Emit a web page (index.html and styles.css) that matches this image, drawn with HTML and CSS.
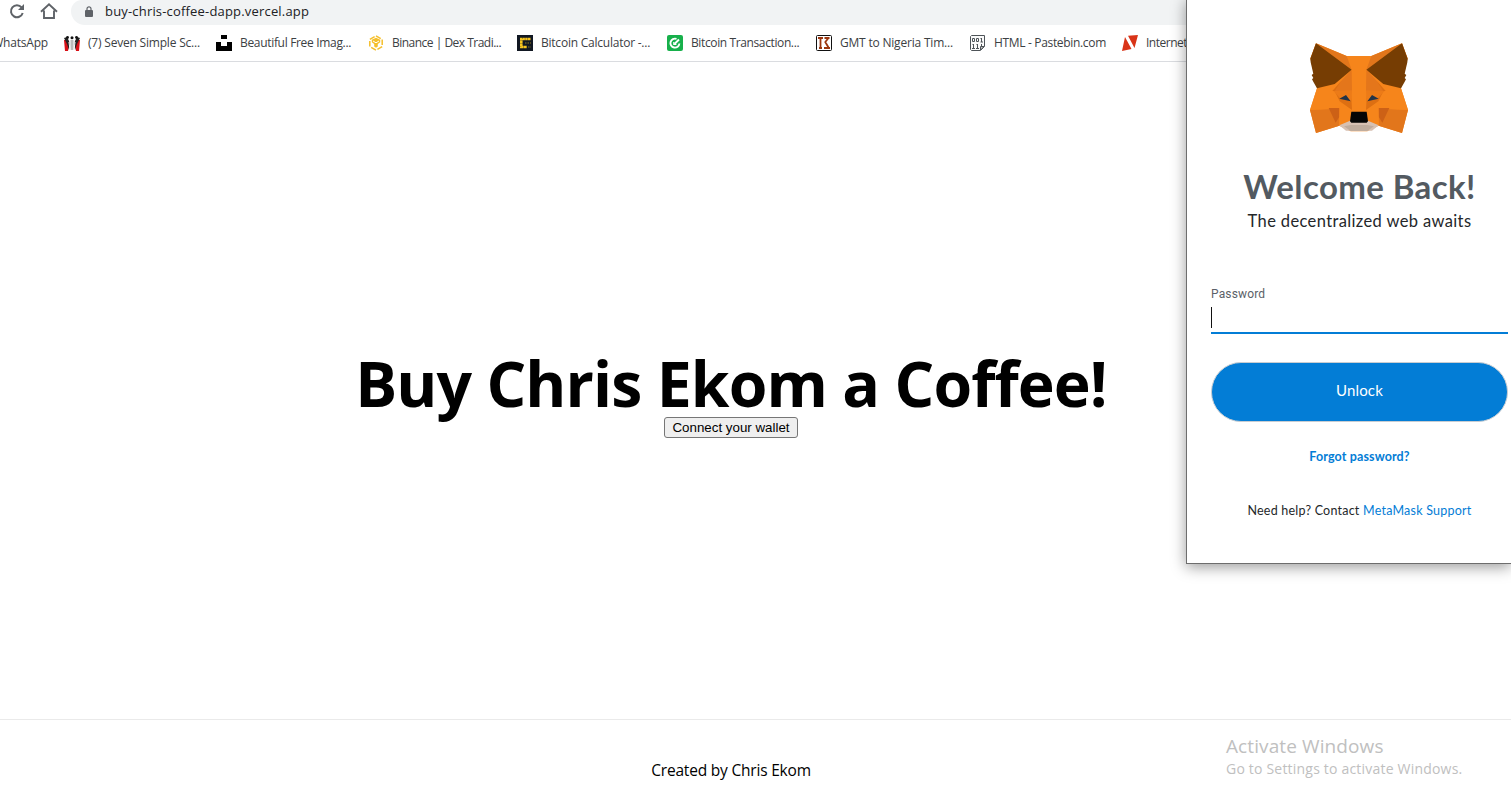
FILE: index.html
```html
<!DOCTYPE html>
<html lang="en">
<head>
<meta charset="utf-8">
<title>Buy Chris Ekom a Coffee!</title>
<link rel="stylesheet" href="styles.css">
</head>
<body>
<div class="screen">
  <header class="browser">
    <div class="toolbar">
      <svg class="reload" width="16" height="18" viewBox="0 0 16 18" fill="none" stroke="#5f6368" stroke-width="2"><path d="M13.700 11A6 6 0 1 1 12.600 5.400"/><path d="M15 2v6H9z" fill="#5f6368" stroke="none"/></svg>
      <svg class="home" width="18" height="18" viewBox="0 0 18 18" fill="none" stroke="#5f6368" stroke-width="1.900"><path d="M1 9.700L9 2.300l8 7.400M4 8.500V16h10V8.500"/></svg>
      <div class="address">
        <svg width="8" height="11" viewBox="0 0 8 11"><rect y="4" width="8" height="7" rx="1" fill="#5f6368"/><path d="M2 4.500V2.800a2 2 0 0 1 4 0v1.700" fill="none" stroke="#5f6368" stroke-width="1.200"/></svg>
        <span class="url">buy-chris-coffee-dapp.vercel.app</span>
      </div>
    </div>
    <nav class="bookmarks">
      <a class="bm first">WhatsApp</a>
      <a class="bm seven"><svg width="16" height="16" viewBox="0 0 16 16"><path d="M0 5l3 0 2 5-1 6H1zM16 5l-3 0-2 5 1 6h3z" fill="#d80f16"/><path d="M0 3l3-1 2 4 1 4-1 5-2-6zM16 3l-3-1-2 4-1 4 1 5 2-6z" fill="#222"/><path d="M6.500 5h3v10h-3z" fill="#bbb"/><circle cx="3.500" cy="2.500" r="1.400" fill="#111"/><circle cx="8" cy="2.800" r="1.500" fill="#111"/><circle cx="12.500" cy="2.500" r="1.400" fill="#111"/><path d="M5 7l1 8M11 7l-1 8" stroke="#fff"/></svg>(7) Seven Simple Sc...</a>
      <a class="bm images"><svg width="16" height="16" viewBox="0 0 16 16"><path d="M5 0h6v4H5zM0 7h5v4h6V7h5v9H0z"/></svg>Beautiful Free Imag...</a>
      <a class="bm binance"><svg width="16" height="16" viewBox="0 0 16 16" fill="none" stroke="#f5bf2b"><path d="M8 .8l6.200 3.600v7.200L8 15.200l-6.200-3.600V4.400z" stroke-width="1.500" stroke-dasharray="5.500 1.700"/><path d="M3.800 4.800L8 2.800l4.200 2v2.500L9.800 9v2.500L8 12.700l-1.800-1.200V9L3.800 7.300z" fill="#f5bf2b" stroke="none"/><path d="M5 6l3 1.800L11 6" stroke="#fff"/></svg>Binance | Dex Tradi...</a>
      <a class="bm calculator"><svg width="16" height="16" viewBox="0 0 16 16"><path fill="#111722" d="M0 0h16v16H0z"/><path d="M13.500 4H4.300v8H10" fill="none" stroke="#f7c51e" stroke-width="2.600" stroke-dasharray="2.500 .3"/><path d="M8 8h6M11 12h3" stroke="#665a22" stroke-width="1.500" stroke-dasharray="1.500 1"/></svg>Bitcoin Calculator -...</a>
      <a class="bm transaction"><svg width="16" height="16" viewBox="0 0 16 16"><rect width="16" height="16" rx="2" fill="#17b04b"/><path d="M12.400 8.500A4.500 4.500 0 1 1 9.500 3.900M7.500 9l4.500-4.500" fill="none" stroke="#fff" stroke-width="1.900"/><path d="M6.800 7v2.500h2.600" fill="none" stroke="#fff" stroke-width="1.200"/></svg>Bitcoin Transaction...</a>
      <a class="bm gmt"><svg width="16" height="16" viewBox="0 0 16 16"><rect x=".5" y=".5" width="15" height="15" rx="1" fill="#fff" stroke="#111"/><path d="M2 3h5M4.500 3v10M3 13h3M8.500 3h5M12.500 3L9.300 7l3.200 5.500M8 13h6" fill="none" stroke="#9b360f" stroke-width="1.800"/></svg>GMT to Nigeria Tim...</a>
      <a class="bm pastebin"><svg width="16" height="16" viewBox="0 0 16 16" fill="none" stroke="#4e5458"><path d="M1.500.5h13v11l-4 4h-9l-1-1v-13z" fill="#fafafa"/><path d="M10.500 15v-3.500H14z" fill="#ccc"/><path d="M2.500 3.500h2v3h-2zM6.500 3.500h2v3h-2zM11.500 3v4M10.500 3.500h1M10.500 7h2.500M3.500 9v4M2.500 9.500h1M2 13.500h3M7.500 9v4M6.500 9.500h1M6 13.500h3M11.500 9v2"/></svg>HTML - Pastebin.com</a>
      <a class="bm internet"><svg width="16" height="16" viewBox="0 0 16 16" fill="#d93418"><path d="M3 2L9.500 14 0 16zM6 .8L16 0l-3.500 13z"/></svg>Internet</a>
    </nav>
  </header>
  <main class="hero">
    <h1>Buy Chris Ekom a Coffee!</h1>
    <button class="connect">Connect your wallet</button>
  </main>
  <footer class="footer">Created by Chris Ekom</footer>

  <aside class="watermark">
    <div class="wm-title">Activate Windows</div>
    <div class="wm-sub">Go to Settings to activate Windows.</div>
  </aside>

  <section class="popup">
    <svg class="fox" width="120" height="108" viewBox="0 0 360 324">
      <path fill="#f6851b" d="M140 66h74l92-38 17 45-20 90 21 65-18 69-70-22-34 17h-50l-34-17-70 22-18-69 21-65-20-90 17-45z"/>
      <path fill="#e2761b" d="M48 28l92 38 15 41zM306 28l-92 38-15 41zM30 228l88-4v51l-70 22zM324 228l-88-4v51l70 22z"/>
      <path fill="#fff" d="M28 68l12 52-5 30 13 16 -22 60-10-80zM326 68l-12 52 5 30-13 16 22 60 10-80z"/>
      <path fill="#e2761b" d="M48 28L32 73l9 36 20-20zM306 28l16 45-9 36-20-20z"/>
      <path fill="#f6851b" d="M51 163l-21 65 88-5 10-21-28-50zM303 163l21 65-88-5-10-21 28-50z"/>
      <path fill="#763d03" d="M48 28l107 79-51 43-53 13-9-16-6-11 4-4-5-9 5-4-8-34-1-11zM306 28L199 107l51 43 53 13 9-16 6-11-4-4 5-9-5-4 8-34 1-11z"/>
      <path fill="#e4761b" d="M155 107l-31 33-24 31 56-1zM199 107l31 33 24 31-56-1z"/>
      <path fill="#dd6f12" d="M124 140l-27 31 56 0 3 57-37-26-15-30zM230 140l27 31-56 0-3 57 37-26 15-30z"/>
      <path fill="#ec7b18" d="M100 171l20 21 33 9 3-31zM254 171l-20 21-33 9-3-31z"/>
      <path fill="#cd6116" d="M86 224h33l-1 26-11 18zM268 224h-33l1 26 11 18z" transform="translate(0 -2)"/>
      <path fill="#f6851b" d="M118 204l40 27-7 37-33 7zM236 204l-40 27 7 37 33 7z"/>
      <path fill="#233447" d="M118 194l20-11 14 19zM236 194l-20-11-14 19z"/>
      <path fill="#d7c1b3" d="M118 274l32-14h54l32 14-20 16h-78z"/>
      <path fill="#c0ad9e" d="M132 277l20-4h50l20 4-20 14h-50z"/>
      <path fill="#050505" d="M154 233h46l4 29-4 4h-46l-4-4z"/>
    </svg>
    <h2>Welcome Back!</h2>
    <p class="tagline">The decentralized web awaits</p>
    <label class="label">Password</label>
    <div class="field"><i class="caret"></i></div>
    <button class="unlock">Unlock</button>
    <a class="forgot">Forgot password?</a>
    <p class="help">Need help? Contact <a>MetaMask Support</a></p>
  </section>
</div>
</body>
</html>
```
FILE: styles.css
```css
* { box-sizing: border-box; }
body { margin: 0; background: #fff; font-family: "Open Sans", sans-serif; overflow: hidden; }
.screen { position: relative; width: 1511px; height: 804px; overflow: hidden; display: flex; flex-direction: column; }
.browser { height: 62px; border-bottom: 1px solid #dadce0; }
.toolbar { height: 25px; display: flex; padding-left: 9px; }
.reload { margin-top: 2px; }
.home { margin: 2px 13px 0 15px; }
.address { flex: 1; height: 25px; background: #f1f3f4; border-bottom-left-radius: 14px; border-top-left-radius: 11px; display: flex; align-items: center; gap: 12px; padding: 0 0 3px 14px; }
.url { font-size: 13px; color: #202124; white-space: nowrap; letter-spacing: 0.18px; }
.bookmarks { display: flex; gap: 16px; height: 36px; align-items: center; white-space: nowrap; font-size: 12px; line-height: 16px; color: #3c4043; letter-spacing: -0.2px; }
.bm { display: flex; gap: 8px; align-items: center; flex: none; }
.bm svg { flex: none; }
.first { width: 48px; justify-content: flex-end; }
.seven { width: 136px; }
.images { width: 136px; letter-spacing: -0.32px; }
.binance { width: 133px; letter-spacing: -0.51px; }
.calculator { width: 134px; letter-spacing: -0.23px; }
.transaction { width: 133px; letter-spacing: -0.38px; }
.gmt { width: 138px; }
.pastebin { width: 136px; letter-spacing: -0.33px; }
.internet { letter-spacing: -0.5px; }
.hero { height: 657px; padding: 289px 49px 0 0; display: flex; flex-direction: column; align-items: center; }
h1 { margin: 0 0 3px; font-size: 62.5px; line-height: 63px; letter-spacing: -0.9px; color: #000; white-space: nowrap; }
.connect { width: 134px; height: 21px; padding: 0; border: 1px solid #767676; border-radius: 3px; background: #efefef; font: 13.333px "Liberation Sans", sans-serif; color: #000; white-space: nowrap; }
.footer { height: 85px; border-top: 1px solid #eaeaea; padding: 38px 49px 0 0; text-align: center; font-size: 15.5px; line-height: 24px; letter-spacing: -0.2px; color: #000; }
.watermark { position: absolute; left: 1226px; top: 734px; color: #c0c0c0; white-space: nowrap; }
.wm-title { font-size: 19px; line-height: 25px; letter-spacing: 0.1px; }
.wm-sub { font-size: 14px; line-height: 20px; letter-spacing: 0.2px; }
.popup { position: absolute; left: 1186px; top: -2px; width: 325px; height: 566px; background: #fff; border: 1px solid #6d6d6d; border-right: 0; box-shadow: 0 3px 14px rgba(0,0,0,.4); padding: 35px 3px 0 24px; display: flex; flex-direction: column; align-items: center; font-family: Lato, sans-serif; white-space: nowrap; }
.fox { flex: none; }
h2 { margin: 23px 0 0; font-size: 33px; line-height: 42px; letter-spacing: 0.4px; color: #535a61; }
.tagline { margin: 2px 0 0; font-size: 16.5px; line-height: 24px; letter-spacing: 0.37px; color: #24272a; }
.label { align-self: flex-start; margin-top: 53px; font: 12px/16px Roboto, sans-serif; letter-spacing: 0.15px; color: #5b6168; }
.field { align-self: stretch; height: 31px; border-bottom: 2px solid #037dd6; padding-top: 4px; margin-top: 1px; }
.caret { display: block; width: 1px; height: 21px; background: #111; }
.unlock { flex: none; margin: 28px 0 0; width: 297px; height: 60px; border: 1px solid #c8cdd2; border-radius: 30px; background: #037dd6; color: #fff; font: 15px Lato, sans-serif; letter-spacing: 0.15px; padding: 0 0 4px; }
.forgot { margin-top: 26px; font-size: 12.5px; line-height: 17px; letter-spacing: 0.13px; font-weight: 700; color: #037dd6; }
.help { margin: 37px 0 0; font-size: 12.5px; line-height: 17px; letter-spacing: 0.23px; color: #24272a; }
.help a { color: #037dd6; }
```
